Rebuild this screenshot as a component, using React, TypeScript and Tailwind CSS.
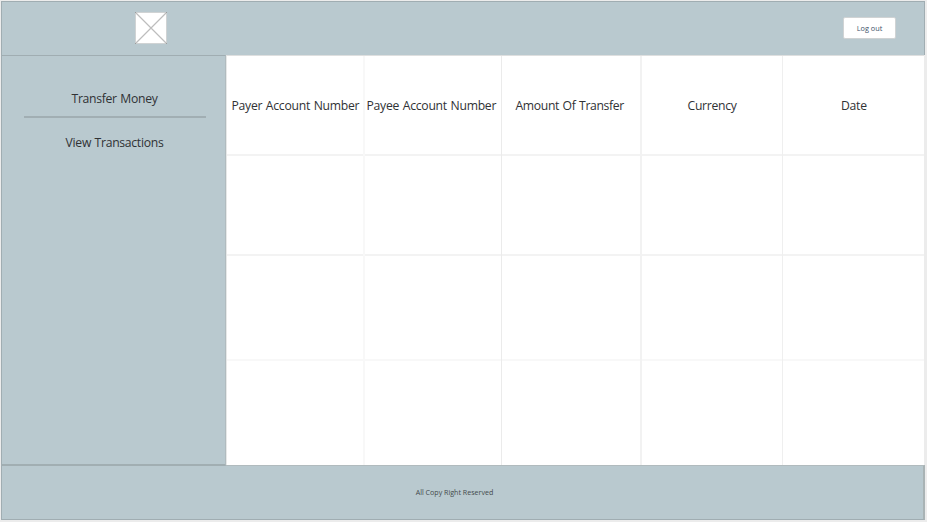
const columns = [
  { title: "Payer Account Number", width: "w-[138px]", line: "border-r-2 border-r-[#f8f8f8]", text: "ml-[4.5px] tracking-[-0.26px]" },
  { title: "Payee Account Number", width: "w-[137px]", line: "border-r border-r-[#ebebeb]", text: "ml-[1.5px] tracking-[-0.26px]" },
  { title: "Amount Of Transfer", width: "w-[140px]", line: "border-r-2 border-r-[#f2f2f2]", text: "ml-[13.5px] tracking-[-0.34px]" },
  { title: "Currency", width: "w-[141px]", line: "border-r border-r-[#efefef]", text: "ml-[45.5px] tracking-[-0.3px]" },
  { title: "Date", width: "w-[141px]", line: "", text: "ml-[58px] tracking-[-0.26px]" },
];

const rows = [
  { id: "header", height: "h-[100px]", line: "border-b-2 border-b-[#f3f3f3]" },
  { id: "first", height: "h-[100px]", line: "border-b-2 border-b-[#f3f3f3]" },
  { id: "second", height: "h-[105px]", line: "border-b-2 border-b-[#f8f8f8]" },
  { id: "third", height: "h-[104px]", line: "" },
];

function Logo() {
  return (
    <svg className="mb-[2px] ml-[133px] h-[32px] w-[32px]" viewBox="0 0 32 32" fill="none">
      <rect x="0.5" y="0.5" width="31" height="31" fill="#fff" stroke="#d0d3d4" />
      <path d="M1 1L31 31M31 1L1 31" stroke="#bdbdbd" strokeWidth="1.2" />
      <path d="M0 0h1v1H0zM31 0h1v1h-1zM0 31h1v1H0zM31 31h1v1h-1z" fill="#9a9c9d" />
    </svg>
  );
}

export default function App() {
  return (
    <div className="flex h-[522px] w-[927px] flex-col bg-[#ececec] pt-px pl-px font-['Open_Sans','Noto_Sans',sans-serif] text-[#303235]">
      <header className="flex h-[54px] w-[924px] items-center justify-between border border-b-0 border-[#a0adb2] bg-[#b9c9cf]">
        <Logo />
        <button className="mr-[28px] mb-[2px] h-[22px] w-[53px] rounded-[2px] border border-[#d0d3d4] bg-white text-center text-[7.3px] leading-[20px] text-[#3d5068]">
          Log out
        </button>
      </header>

      <main className="relative z-10 flex h-[410px]">
        <nav className="flex h-[411px] w-[225px] shrink-0 flex-col items-center border-t border-r border-b-2 border-l border-t-[#a0adb2] border-r-[#b0bbbf] border-b-[#a1aeb2] border-l-[#a0adb2] bg-[#b9c9cf] pl-[2px] text-[12.2px] leading-[18px] tracking-[-0.3px] [word-spacing:0.7px]">
          <a className="mt-[34px] h-[18px] whitespace-nowrap">Transfer Money</a>
          <hr className="mt-[8px] h-[2px] w-[182px] border-0 bg-[#a1aeb3]" />
          <a className="mt-[16px] h-[18px] whitespace-nowrap">View Transactions</a>
        </nav>
        <section className="h-full w-[698px] border-t border-l border-t-[#dedfdf] border-l-[#e6e8e8] bg-white">
          {rows.map((row) => (
            <div key={row.id} className={`flex ${row.height}`}>
              {columns.map((column) => (
                <div key={column.title} className={`shrink-0 ${column.width} ${column.line}`}>
                  <div className={`h-full ${row.line}`}>
                    {row.id === "header" && (
                      <div className={`pt-[41px] text-[12.2px] leading-[18px] [word-spacing:0.7px] whitespace-nowrap ${column.text}`}>
                        {column.title}
                      </div>
                    )}
                  </div>
                </div>
              ))}
            </div>
          ))}
        </section>
      </main>

      <footer className="flex h-[55px] w-[924px] justify-center border-t border-r-2 border-b border-l border-t-[#b1bbbe] border-r-[#a9b3b5] border-b-[#a0adb2] border-l-[#a0adb2] bg-[#b9c9cf] pt-[20px] pr-[16px] text-[7.1px] leading-[12px] text-[#44494c]">
        All Copy Right Reserved
      </footer>
    </div>
  );
}
